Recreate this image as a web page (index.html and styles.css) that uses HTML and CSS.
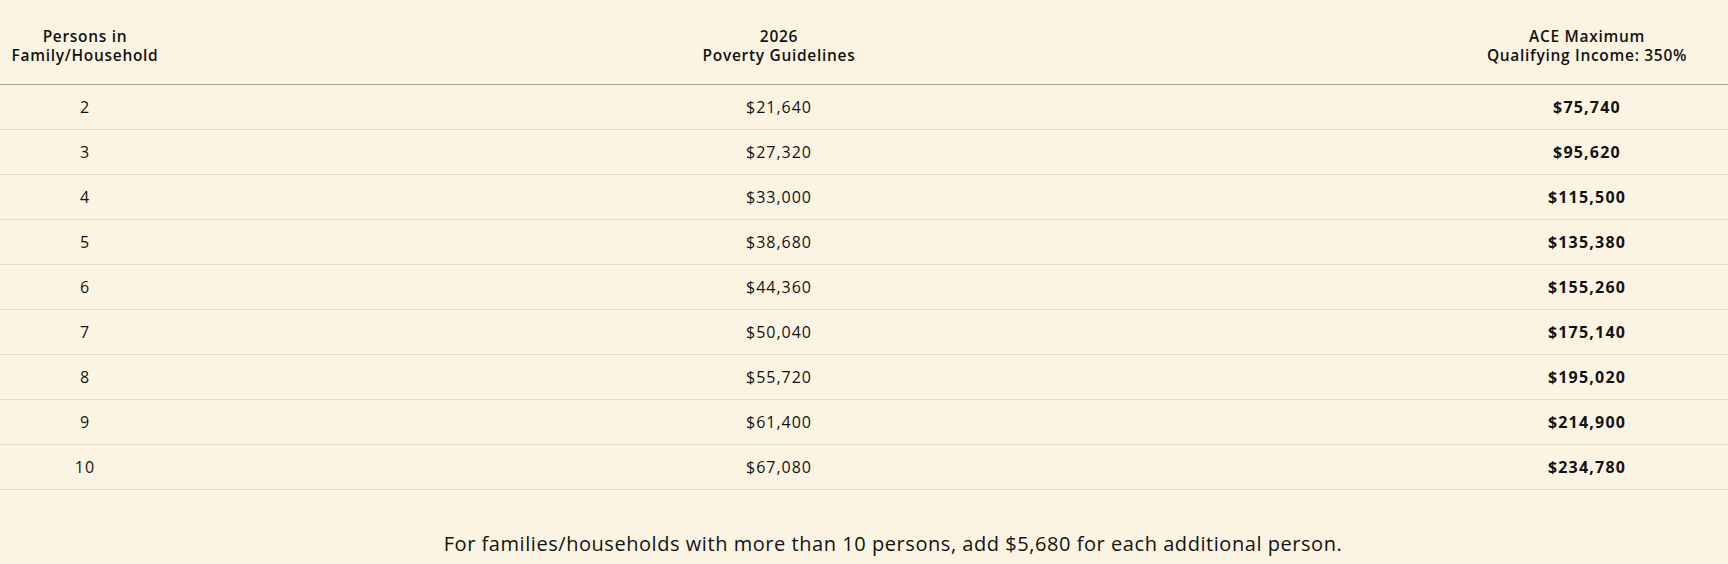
FILE: index.html
```html
<!DOCTYPE html>
<html lang="en">
<head>
<meta charset="utf-8">
<title>2026 Poverty Guidelines</title>
<link rel="stylesheet" href="styles.css">
</head>
<body>
<main class="page">
  <table class="guidelines">
    <colgroup>
      <col class="col-persons">
      <col class="col-poverty">
      <col class="col-ace">
    </colgroup>
    <thead>
      <tr>
        <th class="c-persons">Persons in<br>Family/Household</th>
        <th class="c-poverty">2026<br>Poverty Guidelines</th>
        <th class="c-ace">ACE Maximum<br>Qualifying Income: 350%</th>
      </tr>
    </thead>
    <tbody>
      <tr><td class="c-persons">2</td><td class="c-poverty">$21,640</td><td class="c-ace">$75,740</td></tr>
      <tr><td class="c-persons">3</td><td class="c-poverty">$27,320</td><td class="c-ace">$95,620</td></tr>
      <tr><td class="c-persons">4</td><td class="c-poverty">$33,000</td><td class="c-ace">$115,500</td></tr>
      <tr><td class="c-persons">5</td><td class="c-poverty">$38,680</td><td class="c-ace">$135,380</td></tr>
      <tr><td class="c-persons">6</td><td class="c-poverty">$44,360</td><td class="c-ace">$155,260</td></tr>
      <tr><td class="c-persons">7</td><td class="c-poverty">$50,040</td><td class="c-ace">$175,140</td></tr>
      <tr><td class="c-persons">8</td><td class="c-poverty">$55,720</td><td class="c-ace">$195,020</td></tr>
      <tr><td class="c-persons">9</td><td class="c-poverty">$61,400</td><td class="c-ace">$214,900</td></tr>
      <tr><td class="c-persons">10</td><td class="c-poverty">$67,080</td><td class="c-ace">$234,780</td></tr>
    </tbody>
  </table>
  <p class="note">For families/households with more than 10 persons, add $5,680 for each additional person.</p>
</main>
</body>
</html>
```

FILE: styles.css
```css
html, body {
  margin: 0;
  padding: 0;
  background: #fcf4e3;
}

body {
  font-family: "Open Sans", "Liberation Sans", sans-serif;
  color: #121212;
}

.page {
  width: 1728px;
}

.guidelines {
  width: 1728px;
  border-collapse: collapse;
  table-layout: fixed;
}

.col-persons { width: 170px; }
.col-poverty { width: 1218px; }
.col-ace { width: 340px; }

.guidelines th {
  font-weight: 600;
  font-size: 15.5px;
  line-height: 19px;
  padding: 27px 0 19px;
  text-align: center;
  vertical-align: middle;
  border-bottom: 1px solid #aaa69f;
  letter-spacing: 0.7px;
}

.guidelines td {
  height: 44px;
  padding: 0;
  text-align: center;
  vertical-align: middle;
  font-size: 16px;
  font-weight: 400;
  border-bottom: 1px solid #dedbd6;
  letter-spacing: 1px;
}

.guidelines .c-ace {
  padding-left: 58px;
}

.guidelines td.c-ace {
  font-weight: 700;
  letter-spacing: 1.2px;
}

.note {
  margin: 40px 0 0;
  padding-left: 58px;
  text-align: center;
  font-size: 20px;
  line-height: 28px;
  letter-spacing: 0.55px;
}
```
